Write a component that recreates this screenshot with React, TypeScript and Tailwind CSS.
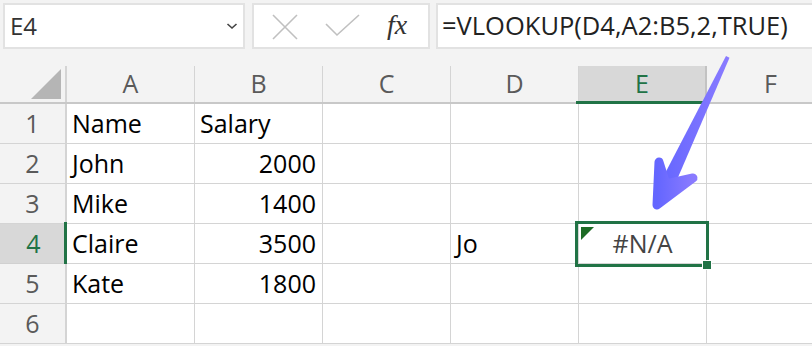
import React from "react";

const cols = ["A", "B", "C", "D", "E", "F"];

type Cell = { t: string; align?: "l" | "r" | "c"; color?: string };
const data: Record<number, Record<string, Cell>> = {
  1: { A: { t: "Name" }, B: { t: "Salary" } },
  2: { A: { t: "John" }, B: { t: "2000", align: "r" } },
  3: { A: { t: "Mike" }, B: { t: "1400", align: "r" } },
  4: {
    A: { t: "Claire" },
    B: { t: "3500", align: "r" },
    D: { t: "Jo" },
    E: { t: "#N/A", align: "c", color: "text-[#444444]" },
  },
  5: { A: { t: "Kate" }, B: { t: "1800", align: "r" } },
  6: {},
};

export default function App() {
  return (
    <div
      className="relative w-[812px] h-[346px] overflow-hidden bg-[#f3f3f3]"
      style={{ fontFamily: '"Open Sans", "Noto Sans", sans-serif' }}
    >
      {/* Top bar */}
      <div className="flex h-[66px] pt-[3px]">
        <div className="shrink-0 ml-[3px] w-[242px] h-[46px] border-2 border-[#e2e2e2] bg-white flex items-center justify-between pl-[5px] pr-[5px]">
          <span className="text-[24px] leading-none text-[#333333]">E4</span>
          <svg width="12" height="8" viewBox="0 0 12 8">
            <path d="M1.5 2 L6 6 L10.5 2" fill="none" stroke="#444" strokeWidth="1.6" />
          </svg>
        </div>
        <div className="shrink-0 ml-[7px] w-[178px] h-[46px] border-2 border-[#e2e2e2] bg-white relative">
          <svg className="absolute left-[17px] top-[8px]" width="28" height="28" viewBox="0 0 28 28">
            <path d="M2 2 L26 26 M26 2 L2 26" stroke="#c0c0c0" strokeWidth="1.6" fill="none" />
          </svg>
          <svg className="absolute left-[71px] top-[9px]" width="36" height="26" viewBox="0 0 36 26">
            <path d="M1 10 L12 21 L34 1" stroke="#c0c0c0" strokeWidth="1.6" fill="none" />
          </svg>
          <span
            className="absolute left-[133px] top-[6px] text-[28px] italic leading-none text-[#333333]"
            style={{ fontFamily: '"Liberation Serif", "DejaVu Serif", serif' }}
          >
            fx
          </span>
        </div>
        <div className="shrink-0 ml-[6px] w-[420px] h-[46px] border-2 border-[#e2e2e2] bg-white flex items-center pl-[4px]">
          <span className="text-[25.5px] leading-none text-[#222222] whitespace-nowrap">
            =VLOOKUP(D4,A2:B5,2,TRUE)
          </span>
        </div>
      </div>

      {/* Column header */}
      <div className="flex h-[38px] border-b-2 border-[#c8c8c8]">
        <div className="w-[67px] shrink-0 border-r-2 border-[#d4d4d4] relative">
          <svg className="absolute left-[31px] top-[3px]" width="30" height="30" viewBox="0 0 30 30">
            <polygon points="30,0 30,30 0,30" fill="#b5b5b5" />
          </svg>
        </div>
        {cols.map((c) => {
          const sel = c === "E";
          return (
            <div
              key={c}
              className={
                sel
                  ? "w-[128px] shrink-0 border-r-2 border-[#c2c2c2] bg-[#d8d8d8] flex items-center justify-center pb-[2px] text-[25px] leading-none text-[#217346] relative"
                  : "w-[128px] shrink-0 border-r border-[#d4d4d4] flex items-center justify-center pb-[2px] text-[25px] leading-none text-[#5a5a5a]"
              }
            >
              {c}
              {sel && <div className="absolute left-[-3px] right-[-2px] bottom-[-2px] h-[3px] bg-[#217346]" />}
            </div>
          );
        })}
      </div>

      {/* Rows */}
      {[1, 2, 3, 4, 5, 6].map((r) => {
        const selRow = r === 4;
        return (
          <div key={r} className="flex h-[40px]">
            <div
              className={
                selRow
                  ? "w-[67px] shrink-0 bg-[#d8d8d8] border-b border-[#d0d0d0] flex items-center justify-center text-[25px] leading-none text-[#217346] relative"
                  : "w-[67px] shrink-0 border-b border-r-2 border-[#d4d4d4] flex items-center justify-center text-[25px] leading-none text-[#5a5a5a]"
              }
            >
              {r}
              {selRow && <div className="absolute right-0 top-[-2px] bottom-[-1px] w-[3px] bg-[#217346]" />}
            </div>
            {cols.map((c) => {
              const cell = data[r][c];
              const align =
                cell?.align === "r" ? "justify-end pr-[6px]" : cell?.align === "c" ? "justify-center" : "justify-start pl-[5px]";
              return (
                <div
                  key={c}
                  className={`w-[128px] shrink-0 bg-white border-r border-b border-[#d4d4d4] flex items-center ${align} text-[25px] leading-none ${cell?.color ?? "text-black"}`}
                >
                  {cell?.t}
                </div>
              );
            })}
          </div>
        );
      })}

      {/* Selection of E4 */}
      <div className="absolute left-[575px] top-[221px] w-[134px] h-[46px] border-[3px] border-[#217346]" />
      <div className="absolute left-[702px] top-[260px] w-[10px] h-[10px] bg-[#217346] border border-white" />
      <svg className="absolute left-[581px] top-[227px]" width="13" height="13" viewBox="0 0 13 13">
        <polygon points="0,0 13,0 0,13" fill="#1d6b25" />
      </svg>

      {/* Arrow */}
      <svg className="absolute left-0 top-0 pointer-events-none" width="812" height="346" viewBox="0 0 812 346">
        <defs>
          <linearGradient id="ag" x1="0" y1="0" x2="1" y2="0" gradientUnits="objectBoundingBox">
            <stop offset="0" stopColor="#6466ff" />
            <stop offset="1" stopColor="#8a7bff" />
          </linearGradient>
        </defs>
        <polygon points="726,56 729.5,57.8 673,189 659.5,184" fill="url(#ag)" />
        <polygon
          points="659,162 666,184 693,178 657,205"
          fill="url(#ag)"
          stroke="url(#ag)"
          strokeWidth="9"
          strokeLinejoin="round"
        />
      </svg>
    </div>
  );
}
